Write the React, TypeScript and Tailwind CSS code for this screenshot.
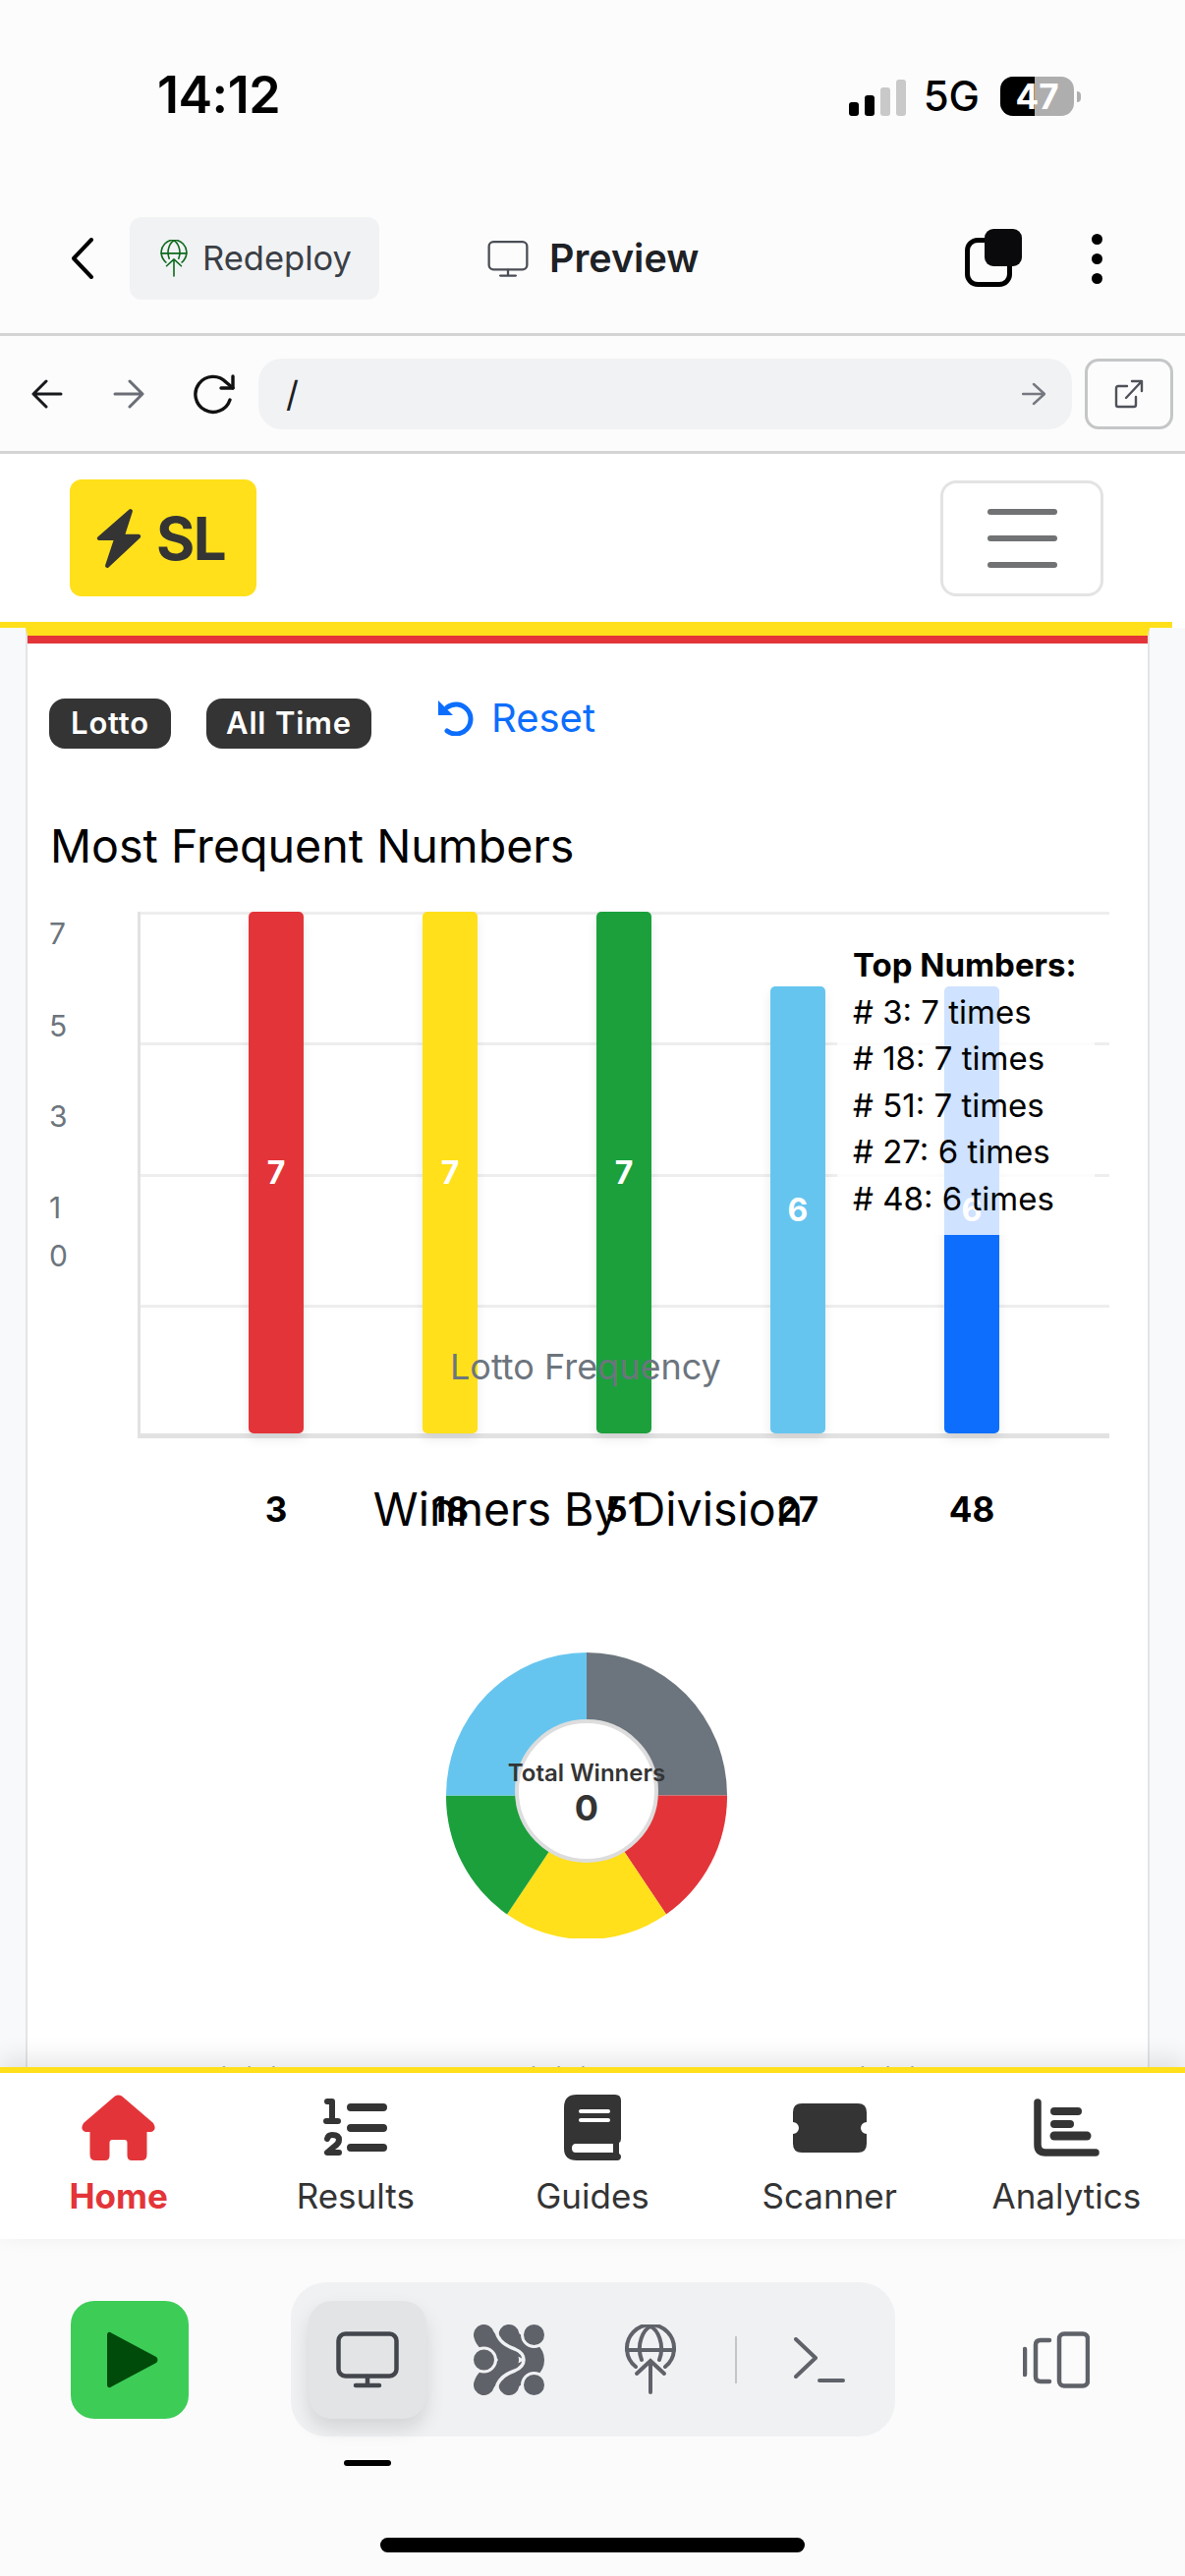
import React from 'react';

const bars = [
  { n: '3', v: 7, h: 'h-[531px]', bg: 'bg-[#e33539]' },
  { n: '18', v: 7, h: 'h-[531px]', bg: 'bg-[#ffe01b]' },
  { n: '51', v: 7, h: 'h-[531px]', bg: 'bg-[#1ba03c]' },
  { n: '27', v: 6, h: 'h-[455px]', bg: 'bg-[#66c5ef]' },
  { n: '48', v: 6, h: 'h-[455px]', bg: 'bg-[#0d6efd]' },
];

const yLabels = [
  { t: '7', cls: 'mt-[0px]' },
  { t: '5', cls: 'mt-[54px]' },
  { t: '3', cls: 'mt-[52px]' },
  { t: '1', cls: 'mt-[53px]' },
  { t: '0', cls: 'mt-[9px]' },
];

const topNumbers = ['# 3: 7 times', '# 18: 7 times', '# 51: 7 times', '# 27: 6 times', '# 48: 6 times'];

function GlobeArrow({ className, stroke, width }: { className: string; stroke: string; width: number }) {
  return (
    <svg viewBox="0 0 52 71" className={className} fill="none" stroke={stroke} strokeWidth={width} strokeLinecap="round">
      <path d="M11 43A24 24 0 1 1 41 43" />
      <path d="M2 26H50" />
      <path d="M17 36C11 20 19 5 26 2C33 5 41 20 35 36" />
      <path d="M26 69V37M12 50L26 37L40 50" />
    </svg>
  );
}

function Monitor({ className, stroke, width }: { className: string; stroke: string; width: number }) {
  return (
    <svg viewBox="0 0 64 58" className={className} fill="none" stroke={stroke} strokeWidth={width} strokeLinecap="round">
      <rect x="2.5" y="2.5" width="59" height="43" rx="7" />
      <path d="M32 46V55M20 55H44" />
    </svg>
  );
}

function StatusBar() {
  return (
    <div className="h-[183px] shrink-0 flex items-start justify-between pt-[67px] pl-[160px] pr-[106px]">
      <div className="text-[52px] leading-[60px] font-semibold text-black tracking-[-0.5px]">14:12</div>
      <div className="flex items-center h-[60px] mt-[1px]">
        <div className="flex items-end gap-[6px] h-[37px] mt-[2px]">
          <div className="w-[10px] h-[14px] rounded-[3px] bg-black" />
          <div className="w-[10px] h-[21px] rounded-[3px] bg-black" />
          <div className="w-[10px] h-[29px] rounded-[3px] bg-[#c9c9c9]" />
          <div className="w-[10px] h-[37px] rounded-[3px] bg-[#c9c9c9]" />
        </div>
        <div className="ml-[18px] text-[42px] leading-[60px] font-medium text-black">5G</div>
        <div className="ml-[21px] relative w-[75px] h-[40px] rounded-[13px] overflow-hidden bg-[#aeaeae] flex items-center justify-center">
          <div className="absolute left-0 top-0 bottom-0 w-[35px] bg-black" />
          <span className="relative text-white text-[35px] font-bold leading-none">47</span>
        </div>
        <div className="ml-[3px] w-[4px] h-[11px] rounded-r-full bg-[#aeaeae]" />
      </div>
    </div>
  );
}

function AppHeader() {
  return (
    <div className="h-[159px] shrink-0 border-b-[3px] border-[#d4d4d4] flex items-center pt-[4px]">
      <svg viewBox="0 0 24 42" className="ml-[72px] w-[24px] h-[42px]" fill="none" stroke="#000" strokeWidth="4" strokeLinecap="round" strokeLinejoin="round">
        <path d="M21 2L3 21L21 40" />
      </svg>
      <div className="ml-[36px] w-[254px] h-[84px] rounded-[12px] bg-[#f1f2f4] flex items-center pl-[31px]">
        <GlobeArrow className="w-[28px] h-[38px]" stroke="#0d6a1c" width={3} />
        <span className="ml-[15px] text-[34.5px] text-[#3a3f45]">Redeploy</span>
      </div>
      <div className="ml-[110px]">
        <Monitor className="w-[42px] h-[39px]" stroke="#4a4d55" width={3.5} />
      </div>
      <span className="ml-[21px] mt-[2px] text-[39.5px] font-semibold text-[#1e2125]">Preview</span>
      <div className="ml-auto relative w-[60px] h-[60px] mr-[71px]">
        <div className="absolute left-[2px] bottom-[1px] w-[48px] h-[50px] rounded-[13px] border-[5px] border-black" />
        <div className="absolute right-0 top-0 w-[38px] h-[38px] rounded-[9px] bg-[#0a0a0c]" />
      </div>
      <div className="flex flex-col gap-[9px] mr-[84px]">
        <div className="w-[11px] h-[11px] rounded-full bg-black" />
        <div className="w-[11px] h-[11px] rounded-full bg-black" />
        <div className="w-[11px] h-[11px] rounded-full bg-black" />
      </div>
    </div>
  );
}

function BrowserBar() {
  return (
    <div className="h-[120px] shrink-0 border-b-[3px] border-[#d4d4d4] flex items-center pl-[32px]">
      <svg viewBox="0 0 32 32" className="w-[32px] h-[32px]" fill="none" stroke="#17191c" strokeWidth="3" strokeLinecap="round" strokeLinejoin="round">
        <path d="M30 16H3M15 3L2 16L15 29" />
      </svg>
      <svg viewBox="0 0 32 32" className="ml-[51px] w-[32px] h-[32px]" fill="none" stroke="#6b6e76" strokeWidth="3" strokeLinecap="round" strokeLinejoin="round">
        <path d="M2 16H29M17 3L30 16L17 29" />
      </svg>
      <svg viewBox="0 0 44 42" className="ml-[49px] w-[44px] h-[42px]" fill="none" stroke="#111" strokeWidth="3.4" strokeLinecap="round" strokeLinejoin="round">
        <path d="M38 27A18 18 0 1 1 34 9L41 15" />
        <path d="M41 3V15H29" />
      </svg>
      <div className="ml-[23px] w-[828px] h-[72px] rounded-[24px] bg-[#f1f2f4] flex items-center pl-[28px] pr-[27px]">
        <span className="text-[36px] text-[#1d1f22]">/</span>
        <svg viewBox="0 0 24 24" className="ml-auto w-[24px] h-[24px]" fill="none" stroke="#75787f" strokeWidth="2.4" strokeLinecap="round" strokeLinejoin="round">
          <path d="M1 12H22M12 2L23 12L12 22" />
        </svg>
      </div>
      <div className="ml-[13px] w-[90px] h-[72px] rounded-[14px] border-[3px] border-[#c4c6c8] flex items-center justify-center">
        <svg viewBox="0 0 30 30" className="w-[30px] h-[30px]" fill="none" stroke="#4f525a" strokeWidth="2.4" strokeLinecap="round" strokeLinejoin="round">
          <path d="M13 7H4Q2 7 2 9V26Q2 28 4 28H20Q22 28 22 26V18" />
          <path d="M12 19L28 2M18 2H28V12" />
        </svg>
      </div>
    </div>
  );
}

function Navbar() {
  return (
    <div className="w-[1193px] h-[177px] shrink-0 bg-white border-b-[6px] border-[#ffe01b] flex items-center justify-between pl-[71px] pr-[70px]">
      <div className="w-[190px] h-[119px] rounded-[12px] bg-[#ffe01b] flex items-center pl-[26px]">
        <svg viewBox="0 0 45 60" className="w-[48px] h-[62px]" fill="#343434" stroke="#343434" strokeWidth="4" strokeLinejoin="round">
          <path d="M34 3L3 30H20L11 57L42 28H26Z" />
        </svg>
        <span className="ml-[14px] text-[60px] font-bold text-[#343434] tracking-[-1.5px]">SL</span>
      </div>
      <div className="w-[166px] h-[118px] rounded-[16px] border-[3px] border-[#e3e3e3] flex flex-col items-center justify-center gap-[21px]">
        <div className="w-[71px] h-[6px] rounded-full bg-[#707274]" />
        <div className="w-[71px] h-[6px] rounded-full bg-[#707274]" />
        <div className="w-[71px] h-[6px] rounded-full bg-[#707274]" />
      </div>
    </div>
  );
}

function FrequencyChart() {
  return (
    <div className="flex mt-[38px]">
      <div className="w-[90px] shrink-0 flex flex-col pt-[2px] text-[30px] leading-[40px] text-[#6c757d]">
        {yLabels.map((y) => (
          <div key={y.t + y.cls} className={y.cls}>
            {y.t}
          </div>
        ))}
      </div>
      <div className="relative w-[989px] h-[536px] border-l-[3px] border-b-[5px] border-[#e2e2e2]">
        <div className="absolute inset-x-0 top-0 h-[403px] flex flex-col justify-between">
          <div className="h-[3px] bg-[#eeeeee]" />
          <div className="h-[3px] bg-[#eeeeee]" />
          <div className="h-[3px] bg-[#eeeeee]" />
          <div className="h-[3px] bg-[#eeeeee]" />
        </div>
        <div className="relative h-[531px] flex items-end gap-[121px] pl-[110px]">
          {bars.map((b) => (
            <div
              key={b.n}
              className={`w-[56px] ${b.h} ${b.bg} rounded-[5px] shadow-[0_6px_12px_rgba(0,0,0,0.08)] flex items-center justify-center text-white text-[32px] font-bold`}
            >
              {b.v}
            </div>
          ))}
        </div>
        <div className="absolute left-[315px] top-[438px] text-[36px] leading-[50px] text-[#6c757d] whitespace-nowrap">
          Lotto Frequency
        </div>
        <div className="absolute left-[709px] top-[26px] w-[262px] h-[303px] bg-white/80 pl-[16px] pt-[5px] text-[33px] leading-[47.5px] text-black whitespace-nowrap">
          <div className="font-bold">Top Numbers:</div>
          {topNumbers.map((t) => (
            <div key={t}>{t}</div>
          ))}
        </div>
      </div>
    </div>
  );
}

function Donut() {
  return (
    <div className="relative w-[286px] h-[291px] ml-[404px] mt-[118px]">
      <svg viewBox="0 0 286 291" className="w-full h-full" preserveAspectRatio="none">
        <path d="M143 145.5V0A143 145.5 0 0 1 286 145.5Z" fill="#6c757d" />
        <path d="M143 145.5H286A143 145.5 0 0 1 224 266.5Z" fill="#e33539" />
        <path d="M143 145.5L224 266.5A143 145.5 0 0 1 62 266.5Z" fill="#ffe01b" />
        <path d="M143 145.5L62 266.5A143 145.5 0 0 1 0 145.5Z" fill="#1ba03c" />
        <path d="M143 145.5H0A143 145.5 0 0 1 143 0Z" fill="#66c5ef" />
      </svg>
      <div className="absolute left-[70px] top-[68px] w-[146px] h-[146px] rounded-full bg-white border-[4px] border-[#dddddd] flex flex-col items-center justify-start">
        <div className="mt-[33px] text-[24px] leading-[35px] font-semibold text-[#343434] whitespace-nowrap">Total Winners</div>
        <div className="text-[36px] leading-[36px] font-bold text-[#343434]">0</div>
      </div>
    </div>
  );
}

function Card() {
  return (
    <div className="ml-[26px] w-[1144px] h-[1470px] bg-white border-x-2 border-t-[8px] border-x-[#e3e4e6] border-t-[#ffe01b]">
      <div className="h-[8px] bg-[#e33539]" />
      <div className="pt-[56px] pl-[22px]">
        <div className="flex items-center h-[51px]">
          <div className="w-[124px] h-[51px] rounded-[16px] bg-[#343434] flex items-center justify-center text-white text-[31px] font-semibold tracking-[0.8px]">
            Lotto
          </div>
          <div className="ml-[36px] w-[168px] h-[51px] rounded-[16px] bg-[#343434] flex items-center justify-center text-white text-[31px] font-semibold tracking-[0.8px]">
            All Time
          </div>
          <svg viewBox="0 0 38 36" className="ml-[68px] mt-[-12px] w-[38px] h-[36px]" fill="none" stroke="#0d6efd" strokeWidth="5" strokeLinecap="round">
            <path d="M9 7A15 15 0 1 1 9 31" />
            <path d="M0 0V15H15Z" fill="#0d6efd" stroke="none" />
          </svg>
          <span className="ml-[16px] mt-[-12px] text-[40px] text-[#0d6efd]">Reset</span>
        </div>
        <div className="mt-[70px] ml-[1px] text-[46.6px] leading-[58px] text-black">Most Frequent Numbers</div>
        <FrequencyChart />
        <div className="flex gap-[121px] pl-[203px] mt-[47px] text-[35px] leading-[50px] font-bold text-black">
          {bars.map((b) => (
            <div key={b.n} className="w-[56px] text-center">
              {b.n}
            </div>
          ))}
        </div>
        <div className="mt-[-53px] pr-[21px] text-center text-[46.5px] leading-[56px] text-black">Winners By Division</div>
        <Donut />
        <div className="flex pl-[151px] mt-[120px] text-[32px] text-[#343434]">
          <div className="w-[315px]">Division 1</div>
          <div className="w-[335px]">Division 2</div>
          <div className="w-[300px]">Division 3</div>
        </div>
      </div>
    </div>
  );
}

function NavIcon({ name }: { name: string }) {
  if (name === 'Home') {
    return (
      <svg viewBox="0 0 75 67" className="w-[75px] h-[67px]" fill="#e33539">
        <path d="M34 1.5Q37.5-0.5 41 1.5L73 29Q77 36 71 38H66.5V61Q66.5 67 61 67H51Q46.5 67 46.5 62V49Q46.5 46 43.5 46H31.5Q28.5 46 28.5 49V62Q28.5 67 24 67H14Q8.5 67 8.5 61V38H4Q-2 36 2 29Z" />
      </svg>
    );
  }
  if (name === 'Results') {
    return (
      <svg viewBox="0 0 65 59" className="w-[65px] h-[59px]" fill="none" stroke="#343434" strokeLinecap="round" strokeLinejoin="round">
        <path d="M28 9H61M28 30H61M28 50H61" strokeWidth="8" />
        <path d="M4 3H9V23M3 23H15" strokeWidth="6" />
        <path d="M4 41Q5 37 9 37Q16 37 16 42Q16 46 11 49L4 55H16" strokeWidth="6" />
      </svg>
    );
  }
  if (name === 'Guides') {
    return (
      <svg viewBox="0 0 58 67" className="w-[58px] h-[67px]">
        <path d="M13 0H52Q58 0 58 6V45Q58 48 56 49V60Q58 61 58 63Q58 67 54 67H13Q0 67 0 55V13Q0 0 13 0Z" fill="#343434" />
        <path d="M17 17H45M17 26H45" stroke="#fff" strokeWidth="4" strokeLinecap="round" />
        <path d="M12 50H50V59H12Q8 59 8 54.5Q8 50 12 50Z" fill="#fff" />
      </svg>
    );
  }
  if (name === 'Scanner') {
    return (
      <svg viewBox="0 0 75 50" className="w-[75px] h-[50px]" fill="#343434">
        <path d="M9 0H66Q75 0 75 9V19A6 6 0 0 0 75 31V41Q75 50 66 50H9Q0 50 0 41V31A6 6 0 0 0 0 19V9Q0 0 9 0Z" />
      </svg>
    );
  }
  return (
    <svg viewBox="0 0 67 59" className="w-[67px] h-[59px]" fill="none" stroke="#343434" strokeLinecap="round" strokeLinejoin="round">
      <path d="M4 4V47Q4 55 12 55H63" strokeWidth="7.5" />
      <path d="M21 13H45M21 26H37" strokeWidth="8" />
      <path d="M21 38H54" strokeWidth="9" />
    </svg>
  );
}

const navItems = ['Home', 'Results', 'Guides', 'Scanner', 'Analytics'];

function BottomNav() {
  return (
    <div className="relative z-10 h-[175px] shrink-0 bg-white border-t-[6px] border-[#ffe01b] shadow-[0_-8px_24px_rgba(0,0,0,0.1)] grid grid-cols-5">
      {navItems.map((n) => (
        <div key={n} className="flex flex-col items-center pt-[22px]">
          <div className="h-[67px] flex items-center justify-center">
            <NavIcon name={n} />
          </div>
          <div className={`mt-[13px] text-[35px] leading-[46px] ${n === 'Home' ? 'font-bold text-[#e33539]' : 'text-[#343434]'}`}>{n}</div>
        </div>
      ))}
    </div>
  );
}

function Toolbar() {
  return (
    <div className="flex-1 bg-[#fbfbfc] flex flex-col">
      <div className="flex items-center pt-[44px] pl-[72px]">
        <div className="w-[120px] h-[120px] rounded-[24px] bg-[#3dcd57] flex items-center justify-center">
          <svg viewBox="0 0 52 58" className="ml-[6px] w-[52px] h-[58px]" fill="#014b0a">
            <path d="M0 3Q1 -1 5 2L50 26Q53 29 50 32L5 56Q1 59 0 55Z" />
          </svg>
        </div>
        <div className="ml-[104px] w-[615px] h-[157px] rounded-[36px] bg-[#f0f1f3] flex items-center pl-[18px]">
          <div className="w-[120px] h-[120px] rounded-[24px] bg-[#e3e4e6] shadow-[0_10px_20px_rgba(0,0,0,0.12)] flex items-center justify-center">
            <Monitor className="w-[64px] h-[58px]" stroke="#43464d" width={4.5} />
          </div>
          <svg viewBox="0 0 72 72" className="ml-[48px] w-[72px] h-[72px]" fill="#5f6269">
            <g fill="none" stroke="#5f6269" strokeWidth="21" strokeLinecap="round">
              <path d="M10.5 10.5C14 24 34 20 35.5 36C34 52 14 48 10.5 61.5" />
              <path d="M36 10.5C38 24 61.5 22 61.5 36C61.5 50 38 48 36 61.5" />
            </g>
            <path d="M22.5 3C23 14 30 21 42 25C49 28 51 32 51 36C51 40 49 44 42 47C30 51 23 58 22.5 69" fill="none" stroke="#f0f1f3" strokeWidth="3.5" strokeLinecap="round" />
            <g stroke="#f0f1f3" strokeWidth="3">
              <circle cx="10.5" cy="36" r="12" />
              <circle cx="61.5" cy="10.5" r="12" />
              <circle cx="61.5" cy="61.5" r="12" />
            </g>
          </svg>
          <GlobeArrow className="ml-[82px] w-[52px] h-[71px]" stroke="#5f6269" width={4} />
          <div className="ml-[60px] w-[2px] h-[48px] bg-[#c3c5c8]" />
          <svg viewBox="0 0 52 46" className="ml-[58px] w-[52px] h-[46px]" fill="none" stroke="#5f6269" strokeWidth="4" strokeLinecap="round" strokeLinejoin="round">
            <path d="M2 2L22 21L2 40" />
            <path d="M26 44H50" />
          </svg>
        </div>
        <svg viewBox="0 0 68 58" className="ml-[130px] w-[68px] h-[58px]" fill="none" stroke="#5f6269" strokeWidth="4.5" strokeLinecap="round" strokeLinejoin="round">
          <path d="M2 18V44" />
          <path d="M27 9H18Q13 9 13 14V46Q13 51 18 51H27" />
          <rect x="37" y="2.5" width="29" height="53" rx="5" />
        </svg>
      </div>
      <div className="ml-[350px] mt-[24px] w-[48px] h-[6px] rounded-full bg-black" />
      <div className="ml-[387px] mt-[73px] w-[432px] h-[15px] rounded-full bg-black" />
    </div>
  );
}

export default function App() {
  return (
    <div className="w-[1206px] h-[2622px] overflow-hidden flex flex-col bg-[#fcfcfc] font-['Inter',sans-serif]">
      <StatusBar />
      <AppHeader />
      <BrowserBar />
      <div className="h-[1642px] shrink-0 flex flex-col bg-[#f8f9fa] overflow-hidden">
        <div className="bg-white">
          <Navbar />
        </div>
        <Card />
      </div>
      <BottomNav />
      <Toolbar />
    </div>
  );
}
